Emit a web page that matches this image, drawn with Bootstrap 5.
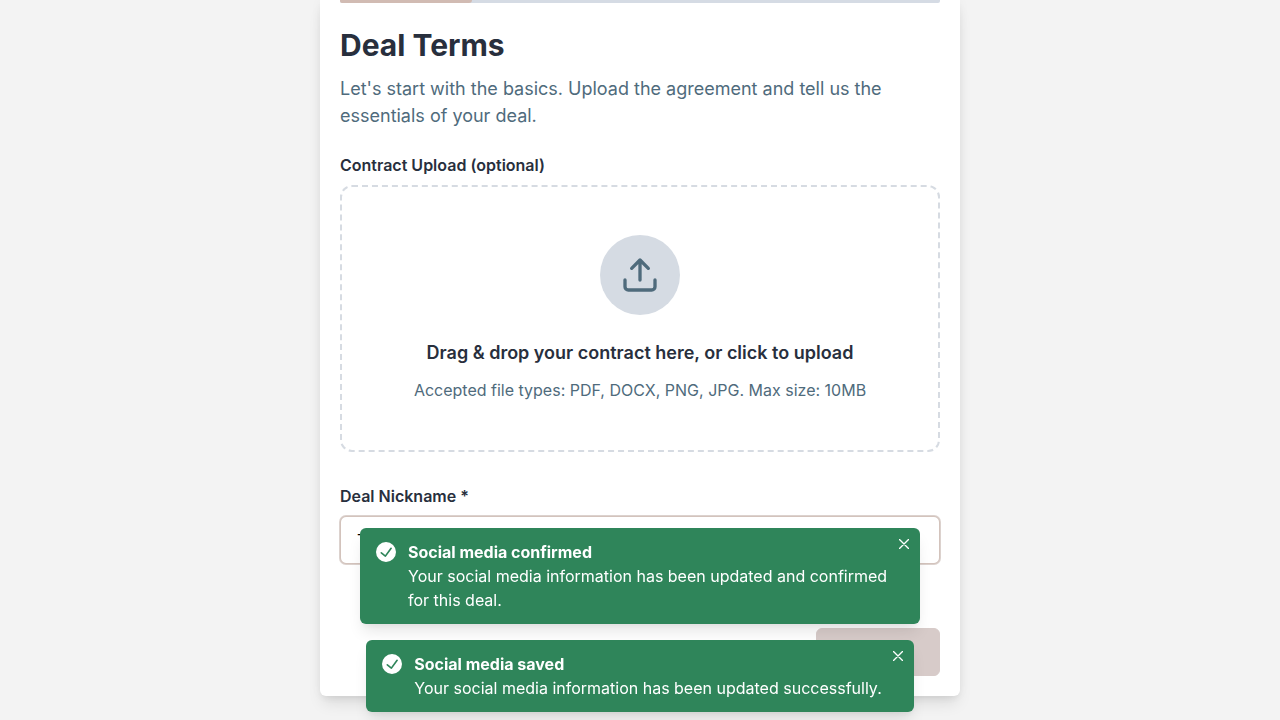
<!DOCTYPE html>
<html lang="en">
<head>
<meta charset="utf-8">
<meta name="viewport" content="width=device-width, initial-scale=1">
<title>Deal Terms</title>
<link href="https://cdn.jsdelivr.net/npm/bootstrap@5.3.0/dist/css/bootstrap.min.css" rel="stylesheet">
<style>
body{font-family:Inter,sans-serif;font-size:16px;line-height:24px;background:#f3f3f3;color:#282f3d}
.wizard{max-width:640px;padding:0 20px 20px;background:#fff;border-radius:0 0 6px 6px;box-shadow:0 10px 15px -3px rgba(0,0,0,.1),0 4px 6px -2px rgba(0,0,0,.05),0 0 12px rgba(0,0,0,.04)}
.steps{height:3px;border-radius:0 0 2px 2px;background:#d5dbe4}
.steps .progress-bar{width:22%;background:#d1bbb3;border-radius:0 0 4px 0}
.title{font-size:30px;line-height:36px;font-weight:700;margin-bottom:12px}
.intro{font-size:18px;line-height:27px}
.slate{color:#4f6b7c}
.form-label{font-weight:600}
.dropzone{border:2px dashed #d6dbe2;border-radius:12px;color:inherit}
.disc{width:80px;height:80px;background:#d5dbe3}
.prompt{font-size:18px;line-height:27px;font-weight:600}
.nickname,.nickname:focus{height:48px;padding:0 16px;border:1px solid #d3c3bc;border-radius:6px;box-shadow:0 0 0 1px #dcd2ce;color:#000}
.next{height:48px;width:124px;border-radius:6px;font-weight:600}
.next:disabled{background:#d7cbc9;border-color:#d7cbc9;color:#fff;opacity:1}
.notices{gap:16px;bottom:8px;padding:0 8px}
.notice{max-width:560px;padding:12px 32px 12px 16px;gap:12px;background:#2f855a;border-radius:6px;box-shadow:0 10px 15px -3px rgba(0,0,0,.1),0 4px 6px -2px rgba(0,0,0,.05)}
.notice strong{font-weight:700}
.dismiss{top:4px;right:4px;width:24px;height:24px}
</style>
</head>
<body class="min-vh-100">
<main class="wizard mx-auto">
  <div class="progress steps mb-4" role="progressbar" aria-label="Progress" aria-valuenow="22" aria-valuemin="0" aria-valuemax="100"><div class="progress-bar"></div></div>
  <h1 class="title">Deal Terms</h1>
  <p class="intro slate mb-4">Let's start with the basics. Upload the agreement and tell us the essentials of your deal.</p>
  <form>
    <label class="form-label d-block mb-2" for="contract">Contract Upload (optional)</label>
    <label class="dropzone d-flex flex-column align-items-center text-center p-5 mb-0" for="contract" role="button">
      <span class="disc rounded-circle d-flex align-items-center justify-content-center mb-4">
        <svg class="slate" width="40" height="40" viewBox="0 0 24 24" fill="none" stroke="currentColor" stroke-width="2" stroke-linecap="round" stroke-linejoin="round" aria-hidden="true"><path d="M21 15v4a2 2 0 0 1-2 2H5a2 2 0 0 1-2-2v-4M17 8l-5-5-5 5M12 3v12"/></svg>
      </span>
      <span class="prompt">Drag &amp; drop your contract here, or click to upload</span>
      <span class="slate pt-1 mt-2">Accepted file types: PDF, DOCX, PNG, JPG. Max size: 10MB</span>
    </label>
    <input class="visually-hidden" type="file" id="contract" accept=".pdf,.docx,.png,.jpg">
    <label class="form-label d-block mb-2 pt-2 mt-4" for="nickname">Deal Nickname *</label>
    <input class="form-control nickname" type="text" id="nickname" value="Test Deal" required>
    <div class="d-flex justify-content-end pt-3 mt-5"><button class="btn next" type="submit" disabled>Next</button></div>
  </form>
</main>
<div class="notices position-fixed start-0 end-0 d-flex flex-column align-items-center" aria-live="polite">
  <div class="notice position-relative d-flex text-white" role="status">
    <svg class="flex-shrink-0" width="20" height="24" viewBox="0 0 24 24" aria-hidden="true"><path fill="currentColor" d="M12 0a12 12 0 1 0 12 12A12.014 12.014 0 0 0 12 0Zm6.927 8.2-6.845 9.289a1.011 1.011 0 0 1-1.43.188l-4.888-3.908a1 1 0 1 1 1.25-1.562l4.076 3.261 6.227-8.451a1 1 0 1 1 1.61 1.183Z"/></svg>
    <div><strong class="d-block">Social media confirmed</strong><span>Your social media information has been updated and confirmed for this deal.</span></div>
    <button class="dismiss btn p-0 border-0 text-white position-absolute d-flex align-items-center justify-content-center" type="button" aria-label="Close"><svg width="10" height="10" viewBox="0 0 10 10" fill="none" stroke="currentColor" stroke-width="1.4" stroke-linecap="round"><path d="M.5.5l9 9M9.500.5l-9 9"/></svg></button>
  </div>
  <div class="notice position-relative d-flex text-white" role="status">
    <svg class="flex-shrink-0" width="20" height="24" viewBox="0 0 24 24" aria-hidden="true"><path fill="currentColor" d="M12 0a12 12 0 1 0 12 12A12.014 12.014 0 0 0 12 0Zm6.927 8.2-6.845 9.289a1.011 1.011 0 0 1-1.43.188l-4.888-3.908a1 1 0 1 1 1.25-1.562l4.076 3.261 6.227-8.451a1 1 0 1 1 1.61 1.183Z"/></svg>
    <div><strong class="d-block">Social media saved</strong><span>Your social media information has been updated successfully.</span></div>
    <button class="dismiss btn p-0 border-0 text-white position-absolute d-flex align-items-center justify-content-center" type="button" aria-label="Close"><svg width="10" height="10" viewBox="0 0 10 10" fill="none" stroke="currentColor" stroke-width="1.4" stroke-linecap="round"><path d="M.5.5l9 9M9.500.5l-9 9"/></svg></button>
  </div>
</div>
<script src="https://cdn.jsdelivr.net/npm/bootstrap@5.3.0/dist/js/bootstrap.bundle.min.js"></script>
</body>
</html>
